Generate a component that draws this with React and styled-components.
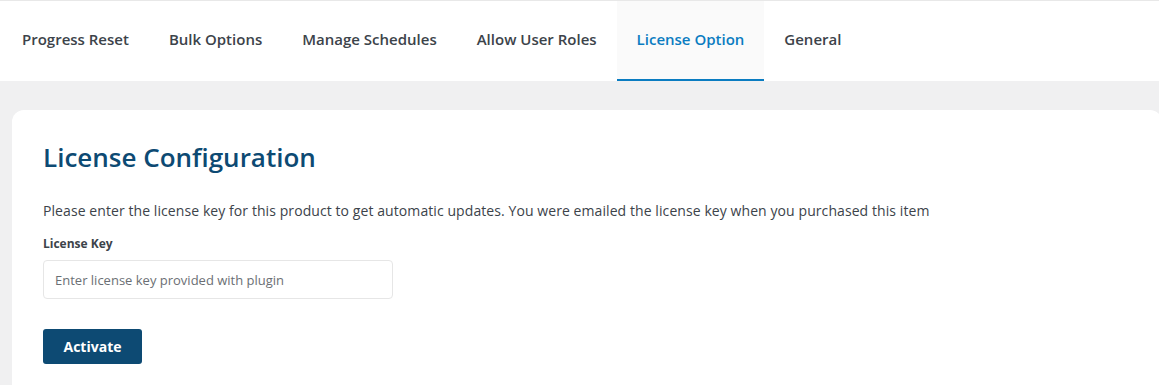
import styled, { createGlobalStyle } from 'styled-components';

const GlobalStyle = createGlobalStyle`
  body {
    margin: 0;
    background: #f0f0f1;
    font-family: "Open Sans", "Noto Sans", sans-serif;
    color: #3c434a;
  }
`;

const Page = styled.div`
  min-height: 385px;
  border-top: 1px solid #e8e8e8;
`;

const TabBar = styled.nav`
  display: flex;
  background: #fff;
  height: 80px;
  padding-left: 2px;
`;

const Tab = styled.a`
  display: flex;
  align-items: center;
  padding: 0 20px 2px;
  font-size: 15px;
  font-weight: 600;
  text-decoration: none;
  cursor: pointer;
  color: ${(p) => (p.$active ? '#0a7cc1' : '#3c434a')};
  background: ${(p) => (p.$active ? '#fafafa' : 'transparent')};
  border-bottom: 2px solid ${(p) => (p.$active ? '#0a7cc1' : 'transparent')};
`;

const Card = styled.section`
  margin: 29px -3px 0 12px;
  background: #fff;
  border-radius: 12px 12px 0 0;
  padding: 29px 31px 22px;
`;

const Title = styled.h1`
  margin: 0 0 26px;
  font-size: 26px;
  font-weight: 600;
  color: #0d4a73;
`;

const Intro = styled.p`
  margin: 0 0 15px;
  font-size: 14px;
  letter-spacing: 0.08px;
`;

const Label = styled.label`
  display: block;
  font-size: 12px;
  font-weight: 700;
  margin-bottom: 8px;
`;

const KeyInput = styled.input`
  display: block;
  box-sizing: border-box;
  width: 350px;
  height: 39px;
  padding: 0 11px;
  border: 1px solid #e6e6e6;
  border-radius: 4px;
  font-family: inherit;
  font-size: 13px;
  color: #3c434a;
  &::placeholder {
    color: #6b6f74;
  }
`;

const ActivateButton = styled.button`
  margin-top: 30px;
  width: 99px;
  height: 35px;
  border: none;
  border-radius: 3px;
  background: #0d4a73;
  color: #fff;
  font-family: inherit;
  font-size: 14px;
  font-weight: 700;
  cursor: pointer;
`;

const tabs = [
  'Progress Reset',
  'Bulk Options',
  'Manage Schedules',
  'Allow User Roles',
  'License Option',
  'General',
];

export default function App() {
  return (
    <Page>
      <GlobalStyle />
      <TabBar>
        {tabs.map((t) => (
          <Tab key={t} $active={t === 'License Option'}>
            {t}
          </Tab>
        ))}
      </TabBar>
      <Card>
        <Title>License Configuration</Title>
        <Intro>
          Please enter the license key for this product to get automatic updates. You were emailed
          the license key when you purchased this item
        </Intro>
        <Label>License Key</Label>
        <KeyInput placeholder="Enter license key provided with plugin" />
        <ActivateButton>Activate</ActivateButton>
      </Card>
    </Page>
  );
}
